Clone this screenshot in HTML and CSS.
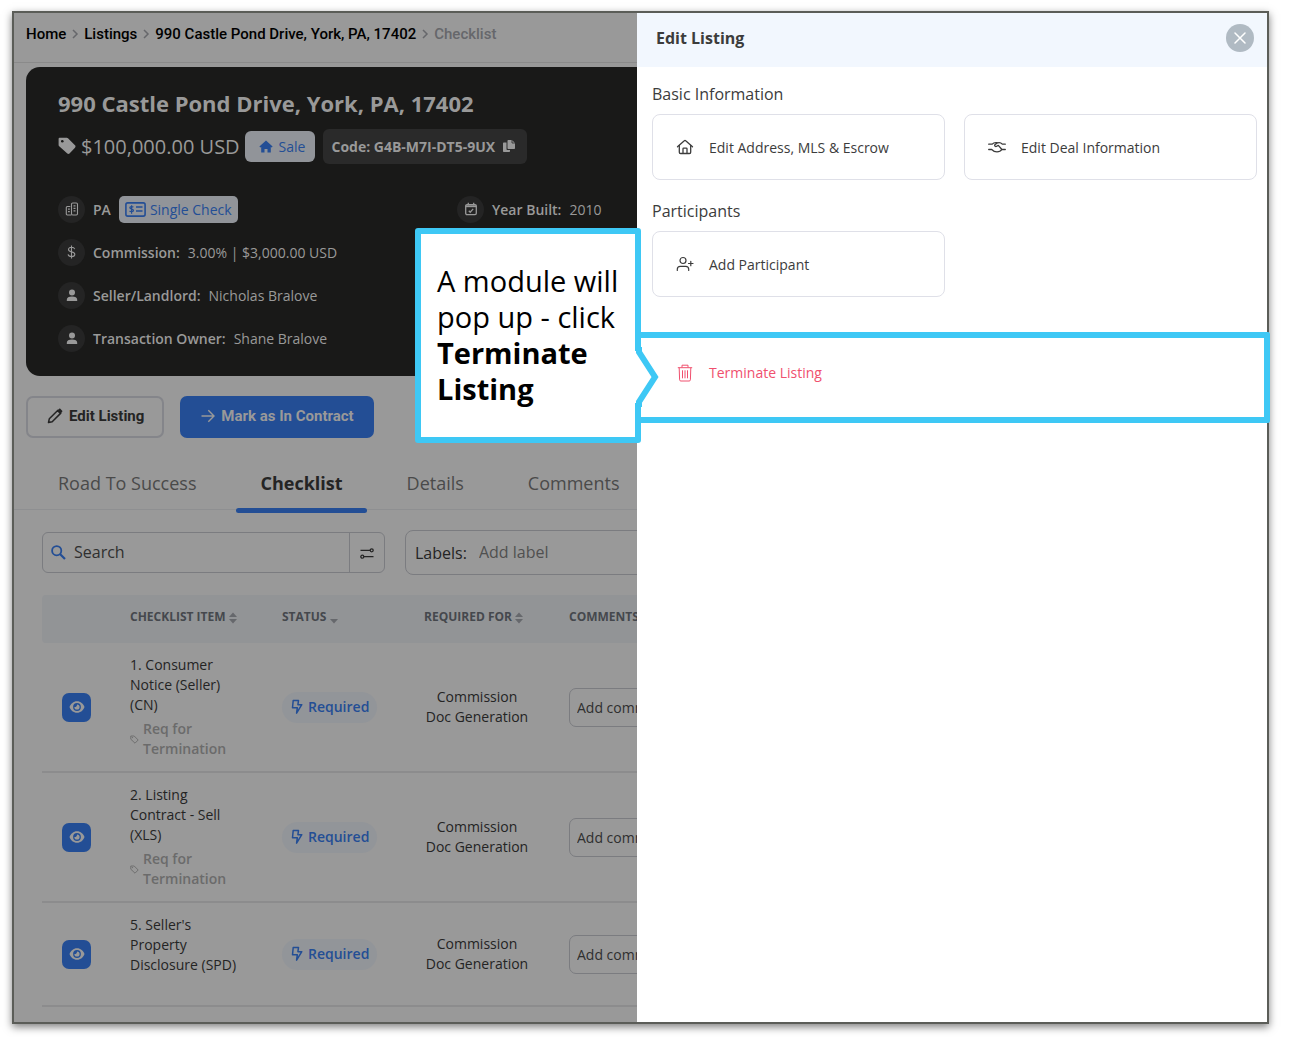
FILE: index.html
```html
<!DOCTYPE html>
<html lang="en">
<head>
    <meta charset="UTF-8">
    <meta name="viewport" content="width=device-width, initial-scale=1.0">
    <title>Edit Listing</title>
    <link rel="stylesheet" href="styles.css">
</head>
<body>
    <!-- Shared icons -->
    <svg class="sprite" aria-hidden="true">
        <symbol id="chevron" viewBox="0 0 8 10"><path d="M2 1l4 4-4 4" fill="none" stroke="currentColor" stroke-width="1.5"/></symbol>
        <symbol id="person" viewBox="0 0 12 14"><circle cx="6" cy="4.500" r="3" fill="currentColor"/><path d="M.8 13v-1.300C.8 9.600 2.800 8.600 6 8.600s5.200 1 5.200 3.100V13z" fill="currentColor"/></symbol>
        <symbol id="eye" viewBox="0 0 16 14"><path d="M8 1.200C4.400 1.200 1.700 3.700.5 7c1.200 3.300 3.900 5.800 7.500 5.800s6.300-2.500 7.500-5.800C14.300 3.700 11.600 1.200 8 1.200z" fill="currentColor"/><circle cx="8" cy="7" r="3.900" fill="#234e95"/><path d="M8 4.400a2.600 2.600 0 1 1-2.600 2.600c.9.400 2.600-.3 2.600-2.600z" fill="currentColor"/></symbol>
        <symbol id="bolt" viewBox="0 0 12 16"><path d="M2.200 1.500h5.300L6.900 5.700h3.900L5.600 14.200 6.300 8.800H1.500z" fill="none" stroke="currentColor" stroke-width="1.500" stroke-linejoin="round"/></symbol>
        <symbol id="tag-line" viewBox="0 0 9 9"><path d="M.8 1h3.400l4 4-3.200 3.200-4.200-4z" fill="none" stroke="currentColor" stroke-width=".9" stroke-linejoin="round"/><circle cx="2.500" cy="2.600" r=".6" fill="currentColor"/></symbol>
        <symbol id="sort" viewBox="0 0 8 12"><path d="M4 .6L8 5H0zM4 11.400L0 7h8z" fill="currentColor"/></symbol>
        <symbol id="sort-down" viewBox="0 0 8 12"><path d="M4 11.400L0 7h8z" fill="currentColor"/></symbol>
    </svg>

    <div class="window">
        <main class="listing">
            <div class="page">
                <nav class="breadcrumb">
                    <a href="#">Home</a>
                    <svg class="chevron"><use href="#chevron"/></svg>
                    <a href="#">Listings</a>
                    <svg class="chevron"><use href="#chevron"/></svg>
                    <a href="#">990 Castle Pond Drive, York, PA, 17402</a>
                    <svg class="chevron"><use href="#chevron"/></svg>
                    <span>Checklist</span>
                </nav>

                <section class="summary">
                    <h1>990 Castle Pond Drive, York, PA, 17402</h1>
                    <div class="price-row">
                        <svg class="price-tag" viewBox="0 0 18 18"><path d="M1.500.8h7.200c.5 0 1 .2 1.300.5l7 7c.7.700.7 1.700 0 2.400l-5.500 5.800c-.6.600-1.500.6-2.200 0L1.200 9.300C.8 9 .6 8.500.6 8V1.700c0-.5.400-.9.900-.9z" fill="currentColor"/><circle cx="4.300" cy="4.300" r="1.300" fill="#191918"/></svg>
                        <span class="price">$100,000.00 USD</span>
                        <span class="badge sale">
                            <svg width="14" height="13" viewBox="0 0 14 13"><path d="M7 .5l6.600 6-.9 1-.9-.4v5.400H8.500V9H5.500v3.500H2.200V7.100l-.9.400-.9-1z" fill="currentColor"/></svg>
                            Sale
                        </span>
                        <span class="code">
                            Code: G4B-M7I-DT5-9UX
                            <svg width="12" height="12" viewBox="0 0 12 12"><path d="M5.500 0H9l3 3v5c0 .6-.4 1-1 1H5.500c-.6 0-1-.4-1-1V1c0-.6.4-1 1-1z" fill="currentColor"/><path d="M1 2.500h2.500V9c0 .6.400 1 1 1H7v1c0 .6-.4 1-1 1H1c-.6 0-1-.4-1-1V3.500c0-.6.4-1 1-1z" fill="currentColor"/><path d="M9 0v3h3" fill="none" stroke="#2a2a2a" stroke-width=".8"/></svg>
                        </span>
                    </div>

                    <div class="facts">
                        <div class="fact">
                            <span class="fact-icon"><svg width="14" height="14" viewBox="0 0 14 14"><g fill="none" stroke="currentColor" stroke-width="1.100"><path d="M6.500 13H2.300c-.6 0-1-.4-1-1V5.500c0-.6.4-1 1-1h3"/><rect x="6.500" y="1" width="6" height="12" rx="1.200"/></g><path d="M8.500 3.200h2v1.300h-2zM8.500 5.700h2V7h-2zM8.500 8.200h2v1.300h-2zM3 6.500h1.800v1.200H3zM3 9h1.800v1.200H3z" fill="currentColor"/></svg></span>
                            <b>PA</b>
                            <span class="badge check">
                                <svg width="21" height="15" viewBox="0 0 21 15"><rect x=".9" y=".9" width="19.200" height="13.200" rx="1.800" fill="none" stroke="currentColor" stroke-width="1.600"/><path d="M11 5h6.500M11 9h6.500" stroke="currentColor" stroke-width="1.500"/><path d="M8.300 5.200c-.4-.8-3.500-1.100-3.500.6 0 1.600 3.700 1 3.700 2.700 0 1.600-3.300 1.500-3.900.4M6.600 3.200v8.600" fill="none" stroke="currentColor" stroke-width="1.200"/></svg>
                                Single Check
                            </span>
                        </div>
                        <div class="fact">
                            <span class="fact-icon"><svg width="14" height="14" viewBox="0 0 14 14"><rect x="1.700" y="2.600" width="10.600" height="10" rx="1.300" fill="none" stroke="currentColor" stroke-width="1.300"/><path d="M1.700 4.300h10.600" stroke="currentColor" stroke-width="1.800"/><path d="M4.300.8v2.500M9.700.8v2.500M4.800 8.800l1.400 1.400 3-3.300" fill="none" stroke="currentColor" stroke-width="1.300"/></svg></span>
                            <b>Year Built:</b><span>2010</span>
                        </div>
                        <div class="fact wide">
                            <span class="fact-icon"><svg width="9" height="14" viewBox="0 0 9 14"><path d="M7.700 4.100C7.300 2.900 6.200 2.300 4.500 2.300c-1.800 0-3 .8-3 2.200 0 3.400 6.300 1.300 6.300 4.800 0 1.500-1.300 2.300-3.200 2.300-2 0-3.200-.8-3.500-2.200M4.500.5v13" fill="none" stroke="currentColor" stroke-width="1.100"/></svg></span>
                            <b>Commission:</b><span>3.00% | $3,000.00 USD</span>
                        </div>
                        <div class="fact wide">
                            <span class="fact-icon"><svg width="12" height="14"><use href="#person"/></svg></span>
                            <b>Seller/Landlord:</b><span>Nicholas Bralove</span>
                        </div>
                        <div class="fact wide">
                            <span class="fact-icon"><svg width="12" height="14"><use href="#person"/></svg></span>
                            <b>Transaction Owner:</b><span>Shane Bralove</span>
                        </div>
                    </div>
                </section>

                <div class="actions">
                    <button type="button" class="btn">
                        <svg width="16" height="16" viewBox="0 0 16 16"><path d="M1.500 14.500l.8-3.700 8.600-8.600 2.900 2.900-8.600 8.600z" fill="none" stroke="currentColor" stroke-width="1.500" stroke-linejoin="round"/><path d="M10 3l2.200-2.200c.3-.3.8-.3 1.100 0l1.900 1.900c.3.300.3.800 0 1.100L13 6z" fill="currentColor"/></svg>
                        Edit Listing
                    </button>
                    <button type="button" class="btn primary">
                        <svg width="14" height="14" viewBox="0 0 14 14"><path d="M.5 7h12.300M7.300 1.200L13 7l-5.700 5.800" fill="none" stroke="currentColor" stroke-width="1.400"/></svg>
                        Mark as In Contract
                    </button>
                </div>

                <nav class="tabs">
                    <a href="#">Road To Success</a>
                    <a href="#" class="active">Checklist</a>
                    <a href="#">Details</a>
                    <a href="#">Comments</a>
                </nav>

                <div class="filters">
                    <div class="search">
                        <svg width="15" height="15" viewBox="0 0 15 15"><circle cx="5.700" cy="5.700" r="4.600" fill="none" stroke="currentColor" stroke-width="1.800"/><path d="M9 9l5 5" stroke="currentColor" stroke-width="2.200"/></svg>
                        <input type="text" placeholder="Search" aria-label="Search">
                        <button type="button" aria-label="Filters">
                            <svg width="14" height="11" viewBox="0 0 14 11"><g fill="none" stroke="currentColor" stroke-width="1.300"><path d="M.5 2.300h9.500M4 8.700h9.500"/><circle cx="11.700" cy="2.300" r="1.500"/><circle cx="2.300" cy="8.700" r="1.500"/></g></svg>
                        </button>
                    </div>
                    <div class="labels">
                        <label for="labels">Labels:</label>
                        <input type="text" id="labels" placeholder="Add label">
                    </div>
                </div>

                <table class="checklist">
                    <thead>
                        <tr>
                            <th class="col-view"></th>
                            <th class="col-item">CHECKLIST ITEM <svg><use href="#sort"/></svg></th>
                            <th class="col-status">STATUS <svg><use href="#sort-down"/></svg></th>
                            <th class="col-required">REQUIRED FOR <svg><use href="#sort"/></svg></th>
                            <th>COMMENTS</th>
                        </tr>
                    </thead>
                    <tbody>
                        <tr>
                            <td><button type="button" class="view" aria-label="View"><svg width="16" height="14"><use href="#eye"/></svg></button></td>
                            <td>
                                <div class="cell">1. Consumer Notice (Seller) (CN)</div>
                                <div class="cell tag"><svg width="9" height="9"><use href="#tag-line"/></svg><span>Req for Termination</span></div>
                            </td>
                            <td><span class="status"><svg width="12" height="16"><use href="#bolt"/></svg>Required</span></td>
                            <td><div class="center">Commission<br>Doc Generation</div></td>
                            <td><input type="text" class="comment" placeholder="Add comment" aria-label="Comment"></td>
                        </tr>
                        <tr>
                            <td><button type="button" class="view" aria-label="View"><svg width="16" height="14"><use href="#eye"/></svg></button></td>
                            <td>
                                <div class="cell">2. Listing Contract - Sell (XLS)</div>
                                <div class="cell tag"><svg width="9" height="9"><use href="#tag-line"/></svg><span>Req for Termination</span></div>
                            </td>
                            <td><span class="status"><svg width="12" height="16"><use href="#bolt"/></svg>Required</span></td>
                            <td><div class="center">Commission<br>Doc Generation</div></td>
                            <td><input type="text" class="comment" placeholder="Add comment" aria-label="Comment"></td>
                        </tr>
                        <tr>
                            <td><button type="button" class="view" aria-label="View"><svg width="16" height="14"><use href="#eye"/></svg></button></td>
                            <td class="untagged">
                                <div class="cell">5. Seller's Property Disclosure (SPD)</div>
                            </td>
                            <td><span class="status"><svg width="12" height="16"><use href="#bolt"/></svg>Required</span></td>
                            <td><div class="center">Commission<br>Doc Generation</div></td>
                            <td><input type="text" class="comment" placeholder="Add comment" aria-label="Comment"></td>
                        </tr>
                    </tbody>
                </table>
            </div>
        </main>

        <aside class="drawer">
            <header class="drawer-header">
                <h2>Edit Listing</h2>
                <button type="button" class="close" aria-label="Close">
                    <svg width="12" height="12" viewBox="0 0 12 12"><path d="M1 1l10 10M11 1L1 11" stroke="currentColor" stroke-width="1.500" stroke-linecap="round"/></svg>
                </button>
            </header>
            <div class="drawer-body">
                <h3>Basic Information</h3>
                <div class="options">
                    <button type="button" class="option">
                        <svg width="18" height="16" viewBox="0 0 18 16"><g fill="none" stroke="currentColor" stroke-width="1.300" stroke-linecap="round" stroke-linejoin="round"><path d="M1.500 7.800L8.300 1.700c.4-.4 1-.4 1.400 0l6.800 6.100"/><path d="M3.300 6.500v6.700c0 .8.500 1.300 1.300 1.300h8.800c.8 0 1.300-.5 1.300-1.300V6.500"/><path d="M7 14.300V9.800c0-.4.300-.7.700-.7h2.600c.4 0 .7.300.7.700v4.500"/></g></svg>
                        Edit Address, MLS &amp; Escrow
                    </button>
                    <button type="button" class="option">
                        <svg width="18" height="14" viewBox="0 0 18 14"><g fill="none" stroke="currentColor" stroke-width="1.300" stroke-linecap="round" stroke-linejoin="round"><path d="M.7 4.200h3.500c1.200-1.400 3-1.900 5-1.500M17.300 4.200h-3c-1.200-1.400-2.900-1.900-4.600-1.400L6.800 4.700c-.6 1.300.7 2.300 2 1.500l1.500-.9 3.600 4.200h3.400"/><path d="M.7 9.500h3c1.600 1.700 3.300 2.400 5.300 2.400s3.800-.8 4.700-2.400"/></g></svg>
                        Edit Deal Information
                    </button>
                </div>
                <h3>Participants</h3>
                <div class="options">
                    <button type="button" class="option">
                        <svg width="18" height="16" viewBox="0 0 18 16"><g fill="none" stroke="currentColor" stroke-width="1.200" stroke-linecap="round"><circle cx="7" cy="4.500" r="3"/><path d="M1.300 14.500v-1.300c0-1.700 1.300-2.900 3-2.900h5.400c1.700 0 3 1.200 3 2.900v1.300M12.500 7.500h4.500M14.800 5.300v4.400"/></g></svg>
                        Add Participant
                    </button>
                </div>
                <div class="terminate-row">
                    <button type="button" class="terminate">
                        <svg width="16" height="18" viewBox="0 0 16 18"><g fill="none" stroke="currentColor" stroke-width="1"><path d="M.8 3.700h14.400M5 3.500V1.200h6v2.300M2.200 3.800l.4 12c0 .7.500 1.200 1.200 1.200h8.400c.7 0 1.200-.5 1.200-1.200l.4-12M5.500 6.300v8M8 6.300v8M10.500 6.300v8"/></g></svg>
                        Terminate Listing
                    </button>
                    <div class="callout">
                        <p>A module will pop up - click <strong>Terminate Listing</strong></p>
                        <svg class="pointer" width="24" height="60" viewBox="0 0 24 60"><path d="M0 4h3l17 26L3 56H0z" fill="#fff"/><path d="M4 0v5l16 25L4 55v5" fill="none" stroke="#3ec8f5" stroke-width="6"/></svg>
                    </div>
                </div>
            </div>
        </aside>
    </div>
</body>
</html>
```

FILE: styles.css
```css
* {
    box-sizing: border-box;
}
body {
    margin: 0;
    padding: 11px 20px 13px 12px;
    background: #fff;
    color: #3c3c3c;
    font-family: "Open Sans", "Noto Sans", sans-serif;
    font-size: 14px;
}
h1, h2, h3, p {
    margin: 0;
}
a {
    color: inherit;
    text-decoration: none;
}
button, input {
    font: inherit;
    color: inherit;
}
button {
    cursor: pointer;
}
svg {
    flex: none;
}
.sprite {
    position: absolute;
    width: 0;
    height: 0;
}
.window {
    display: flex;
    min-height: calc(100vh - 24px);
    border: 2px solid #5b5d58;
    box-shadow: 0 3px 8px rgba(0,0,0,0.5);
}

/* Listing page, dimmed behind the drawer */
.listing {
    flex: 1;
    min-width: 0;
    overflow: hidden;
    background: #999;
    color: #242424;
}
.page {
    width: 890px;
}
.breadcrumb {
    display: flex;
    align-items: center;
    gap: 5px;
    height: 50px;
    padding: 0 12px 8px;
    border-bottom: 1px solid #8a8a8a;
    color: #000;
    font-family: Roboto, sans-serif;
    font-size: 15px;
    font-weight: 500;
}
.breadcrumb span {
    color: #66676b;
}
.chevron {
    width: 8px;
    height: 10px;
    color: #66676b;
}
.summary {
    margin: 4px 12px 0;
    padding: 21px 32px 24px;
    border-radius: 14px;
    background: #191918;
    color: #999;
}
.summary h1 {
    font-size: 22px;
    line-height: 30px;
}
.price-row {
    display: flex;
    align-items: center;
    margin-top: 10px;
    height: 36px;
}
.price-tag {
    width: 18px;
    height: 18px;
}
.price {
    margin: 0 5px;
    font-size: 20px;
}
.badge {
    display: flex;
    align-items: center;
    border-radius: 6px;
    background: #919499;
    color: #234e95;
    font-weight: 500;
}
.sale {
    gap: 6px;
    height: 31px;
    padding: 0 10px 0 14px;
}
.code {
    display: flex;
    align-items: center;
    gap: 8px;
    height: 35px;
    margin-left: 8px;
    padding: 0 12px 0 8px;
    border-radius: 6px;
    background: #2a2a2a;
    font-weight: 700;
}
.facts {
    display: grid;
    grid-template-columns: 399px 1fr;
    row-gap: 15px;
    margin-top: 31px;
}
.fact {
    display: flex;
    align-items: center;
    gap: 8px;
    height: 28px;
}
.fact.wide {
    grid-column: 1 / -1;
}
.fact b {
    font-weight: 600;
}
.fact-icon {
    display: flex;
    align-items: center;
    justify-content: center;
    width: 27px;
    height: 27px;
    border-radius: 50%;
    background: #242424;
}
.check {
    gap: 4px;
    height: 27px;
    padding: 0 6px;
    border-radius: 5px;
}
.actions {
    display: flex;
    gap: 16px;
    padding: 20px 12px 0;
}
.btn {
    display: flex;
    align-items: center;
    gap: 6px;
    height: 42px;
    padding: 0 18px 2px 19px;
    border: 2px solid #84858a;
    border-radius: 7px;
    background: none;
    font-family: Roboto, sans-serif;
    font-size: 15px;
    font-weight: 700;
}
.btn.primary {
    border-color: #234e95;
    background: #234e95;
    color: #999;
}
.tabs {
    display: flex;
    gap: 16px;
    height: 72px;
    padding: 18px 20px 0;
    border-bottom: 1px solid #8e8f91;
    color: #4a4a4a;
    font-size: 18px;
}
.tabs a {
    height: 57px;
    padding: 14px 24px 0;
    line-height: 26px;
}
.tabs .active {
    position: relative;
    color: #242424;
    font-weight: 700;
}
.tabs .active::after {
    content: "";
    position: absolute;
    left: 0;
    right: 0;
    bottom: 0;
    height: 5px;
    border-radius: 3px;
    background: #234e95;
}
.filters {
    display: flex;
    align-items: center;
    gap: 20px;
    padding: 20px 28px;
    font-size: 16px;
}
.search {
    display: flex;
    align-items: center;
    width: 343px;
    height: 41px;
    border: 1px solid #7b7c80;
    border-radius: 6px;
}
.search > svg {
    margin: 0 8px;
    color: #234e95;
}
.search input, .labels input {
    flex: 1;
    min-width: 0;
    padding: 0 0 1px;
    border: 0;
    background: none;
}
.search button {
    width: 35px;
    height: 39px;
    padding: 0;
    border: 0;
    border-left: 1px solid #7b7c80;
    background: none;
}
::placeholder {
    color: #2f2f2f;
    opacity: 1;
}
.labels {
    display: flex;
    align-items: center;
    flex: 1;
    gap: 12px;
    height: 45px;
    padding: 0 9px;
    border: 1px solid #7b7c80;
    border-radius: 8px;
}
.labels ::placeholder {
    color: #505050;
}
.checklist {
    width: 834px;
    margin: 0 28px 14px;
    border-collapse: collapse;
    table-layout: fixed;
}
.checklist th {
    height: 48px;
    padding: 0 8px 5px;
    background: #929496;
    color: #45484d;
    font-size: 12px;
    text-align: left;
    white-space: nowrap;
}
.checklist th:first-child {
    border-radius: 4px 0 0 4px;
}
.checklist th svg {
    width: 8px;
    height: 12px;
    color: #66686c;
    vertical-align: -3px;
}
.col-view {
    width: 80px;
}
.col-item {
    width: 152px;
}
.col-status {
    width: 142px;
}
.col-required {
    width: 145px;
}
.checklist td {
    padding: 12px 8px;
    border-bottom: 2px solid #8c8c8d;
    line-height: 20px;
}
.checklist .untagged {
    padding-bottom: 30px;
}
.cell {
    width: 112px;
}
.center {
    width: 106px;
    text-align: center;
}
.tag {
    display: flex;
    align-items: center;
    gap: 4px;
    margin-top: 4px;
    color: #6b6b6b;
    font-weight: 600;
}
.view {
    display: flex;
    align-items: center;
    justify-content: center;
    width: 29px;
    height: 29px;
    margin-left: 12px;
    padding: 0;
    border: 0;
    border-radius: 7px;
    background: #234e95;
    color: #999;
}
.status {
    display: inline-flex;
    align-items: center;
    gap: 5px;
    height: 31px;
    padding: 0 8px 0 9px;
    border-radius: 16px;
    background: #929599;
    color: #234e95;
    font-weight: 600;
}
.comment {
    width: 240px;
    height: 39px;
    padding: 0 7px;
    border: 1px solid #7b7c80;
    border-radius: 7px;
    background: none;
}

/* Drawer */
.drawer {
    width: 630px;
    background: #fff;
}
.drawer-header {
    display: flex;
    align-items: center;
    justify-content: space-between;
    height: 54px;
    padding: 0 13px 5px 19px;
    background: #f2f7fe;
}
.drawer-header h2 {
    font-size: 16px;
}
.close {
    display: flex;
    align-items: center;
    justify-content: center;
    width: 28px;
    height: 28px;
    padding: 0;
    border: 0;
    border-radius: 50%;
    background: #b0bac3;
    color: #fff;
}
.drawer-body {
    padding: 15px 10px 0 15px;
}
.drawer-body h3 {
    font-size: 16px;
    font-weight: 500;
    line-height: 24px;
}
.options {
    display: grid;
    grid-template-columns: 1fr 1fr;
    gap: 19px;
    margin: 8px 0 19px;
}
.option {
    display: flex;
    align-items: center;
    gap: 15px;
    height: 66px;
    padding: 0 23px;
    border: 1px solid #dfe0e8;
    border-radius: 8px;
    background: #fff;
}
.terminate-row {
    position: relative;
    margin: 35px -13px 0 -15px;
    padding: 19px 35px 29px;
    border: 6px solid #3ec8f5;
    border-left: 0;
    border-radius: 0 3px 3px 0;
}
.terminate {
    display: flex;
    align-items: center;
    gap: 16px;
    height: 31px;
    padding: 0 5px;
    border: 0;
    background: none;
    color: #f0506e;
}

/* Callout beside the terminate button */
.callout {
    position: absolute;
    top: -110px;
    left: -222px;
    width: 226px;
    height: 215px;
    padding: 29px 12px 0 16px;
    border: 6px solid #3ec8f5;
    border-radius: 3px;
    background: #fff;
    color: #000;
    font-size: 29px;
    line-height: 36px;
}
.pointer {
    position: absolute;
    top: 113px;
    right: -24px;
}
```
